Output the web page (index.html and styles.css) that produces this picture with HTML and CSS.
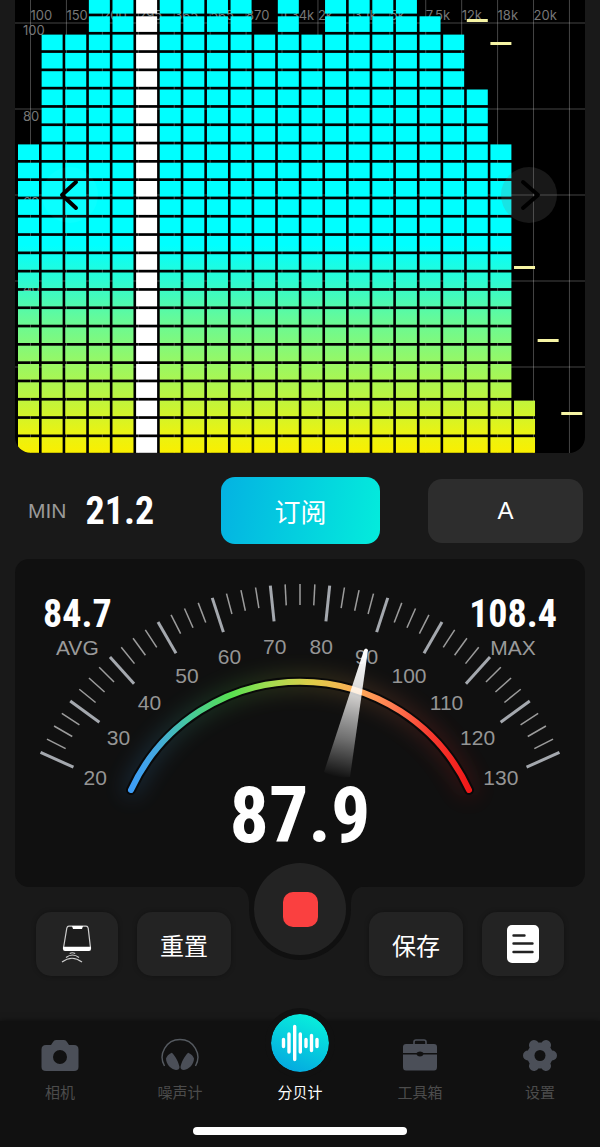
FILE: index.html
```html
<!DOCTYPE html>
<html lang="zh-CN">
<head>
  <meta charset="UTF-8">
  <meta name="viewport" content="width=device-width, initial-scale=1.0">
  <title>分贝计</title>
  <link rel="stylesheet" href="styles.css">
</head>
<body>

  <div class="app">
    <!-- Spectrum -->
    <section class="spectrum">
      <svg class="spectrum-chart" id="spectrum" viewBox="0 0 570 453">
        <defs>
          <linearGradient id="barFill" gradientUnits="userSpaceOnUse" x1="0" y1="0" x2="0" y2="453">
            <stop offset="0.54" stop-color="#00ffff"/>
            <stop offset="0.62" stop-color="#2cfbd2"/>
            <stop offset="0.7" stop-color="#62fa9c"/>
            <stop offset="0.79" stop-color="#92f86a"/>
            <stop offset="0.87" stop-color="#b8f544"/>
            <stop offset="0.95" stop-color="#e6f316"/>
            <stop offset="1" stop-color="#faef00"/>
          </linearGradient>
        </defs>
      </svg>
      <button class="arrow arrow-left" aria-label="上一个">
        <svg width="56" height="56" viewBox="0 0 56 56"><path d="M34 15 20 28l14 13"/></svg>
      </button>
      <button class="arrow arrow-right" aria-label="下一个">
        <svg width="56" height="56" viewBox="0 0 56 56"><path d="M22 15l15 13-15 13"/></svg>
      </button>
    </section>

    <!-- Min value and buttons -->
    <section class="controls">
      <div class="min">
        <span class="caption">MIN</span>
        <span class="number">21.2</span>
      </div>
      <button class="subscribe">订阅</button>
      <button class="weighting">A</button>
    </section>

    <!-- Gauge -->
    <section class="gauge">
      <svg class="gauge-dial" viewBox="0 0 570 328">
        <defs>
          <linearGradient id="arcFill" gradientUnits="userSpaceOnUse" x1="114" y1="0" x2="455" y2="0">
            <stop offset="0" stop-color="#3c9cf8"/>
            <stop offset="0.08" stop-color="#44a8e0"/>
            <stop offset="0.17" stop-color="#45c8a0"/>
            <stop offset="0.3" stop-color="#58e050"/>
            <stop offset="0.42" stop-color="#a8dc50"/>
            <stop offset="0.54" stop-color="#e0cc48"/>
            <stop offset="0.68" stop-color="#ffa858"/>
            <stop offset="0.78" stop-color="#ff7850"/>
            <stop offset="0.88" stop-color="#f83c30"/>
            <stop offset="1" stop-color="#f01818"/>
          </linearGradient>
          <linearGradient id="needleFill" gradientUnits="userSpaceOnUse" x1="350" y1="90" x2="321" y2="218">
            <stop offset="0" stop-color="#fff"/>
            <stop offset="0.3" stop-color="#fff" stop-opacity="0.85"/>
            <stop offset="0.7" stop-color="#fff" stop-opacity="0.4"/>
            <stop offset="1" stop-color="#fff" stop-opacity="0"/>
          </linearGradient>
          <filter id="glow" x="-20%" y="-40%" width="140%" height="180%">
            <feGaussianBlur stdDeviation="11"/>
          </filter>
        </defs>
        <path class="notch" d="M217 327q16 0 17 16v7a51 51 0 0 0 102 0v-7q1-16 17-16z"/>
        <path class="arc-glow" d="M116 231A186 186 0 0 1 454 231"/>
        <path class="arc-edge" d="M116 231A186 186 0 0 1 454 231"/>
        <path class="arc" d="M116 231A186 186 0 0 1 454 231"/>
        <g id="scale"></g>
        <path class="needle" d="M349 91q2-3 4 0L335 218Q322 220 309 213z"/>
      </svg>
      <div class="readings">
        <div class="reading">
          <span class="number">84.7</span>
          <span class="caption">AVG</span>
        </div>
        <div class="reading">
          <span class="number">108.4</span>
          <span class="caption">MAX</span>
        </div>
      </div>
      <div class="current">87.9</div>
    </section>

    <!-- Actions -->
    <section class="actions">
      <button class="action action-icon" aria-label="手机">
        <svg width="34" height="40" viewBox="0 0 34 40">
          <path d="M9 2.200h17q1.800 0 2.200 2L30.500 24h-27L6.800 4.200Q7.200 2.200 9 2.200z" fill="#1c1c1c" stroke="#ccc" stroke-width="1.200"/>
          <path d="M12 2h11l-1 3h-9z" fill="#fff"/>
          <path d="M3 22.700h28v2.300q0 2-2 2H5q-2 0-2-2z" fill="#fff"/>
          <path d="M9.700 29.500q2.500-1.500 5.500 0M6 33.500q6.500-5 13 0M2 38q10-7.500 20 0" fill="none" stroke="#ccc" stroke-width="1.200"/>
        </svg>
      </button>
      <button class="action">重置</button>
      <button class="record" aria-label="停止"><span class="stop"></span></button>
      <button class="action">保存</button>
      <button class="action action-icon" aria-label="记录">
        <svg width="32" height="38" viewBox="0 0 32 38">
          <rect width="32" height="38" rx="5" fill="#fff"/>
          <path d="M6.500 10.500h11M6.500 18.500h19M6.500 27h19" stroke="#222" stroke-width="2.400" stroke-linecap="round"/>
        </svg>
      </button>
    </section>

    <!-- Tab bar -->
    <nav class="tab-bar">
      <div class="tabs">
        <a class="tab" href="#">
          <svg class="tab-icon" viewBox="0 0 38 34">
            <path fill-rule="evenodd" d="M5 7h5l2-3q1-2 3-2h8q2 0 3 2l2 3h5q4.500 0 4.500 4.500V29q0 4-4.500 4H5q-4.500 0-4.500-4V11.500Q.500 7 5 7zM19 12a7 7 0 1 0 0 14 7 7 0 0 0 0-14z"/>
          </svg>
          <span>相机</span>
        </a>
        <a class="tab" href="#">
          <svg class="tab-icon" viewBox="0 0 38 34">
            <path d="M3.500 28A17.800 17.800 0 1 1 34.500 28" fill="none" stroke="#555a60" stroke-width="1.400"/>
            <path d="M10.700 14.700C14 17 18 25 18.500 29q0 3-3.500 3C10 31.500 5 26 5 20.500q1-3.500 5.700-5.800zM27.300 14.700C24 17 20 25 19.500 29q0 3 3.500 3C28 31.500 33 26 33 20.500q-1-3.500-5.700-5.800z"/>
          </svg>
          <span>噪声计</span>
        </a>
        <a class="tab tab-active" href="#">
          <svg class="tab-round" viewBox="0 0 58 58">
            <defs>
              <linearGradient id="tabFill" x1="0.700" y1="0" x2="0.300" y2="1">
                <stop offset="0" stop-color="#08f0dc"/>
                <stop offset="1" stop-color="#04a8e0"/>
              </linearGradient>
            </defs>
            <circle cx="29" cy="29" r="29" fill="url(#tabFill)"/>
            <path d="M12.500 25.500v7M18 20v18M23.700 12.500v33M29.300 20v18M35 25.500v7M40.500 21.500v15M46 25.500v7" stroke="#fff" stroke-width="3.400" stroke-linecap="round"/>
          </svg>
          <span>分贝计</span>
        </a>
        <a class="tab" href="#">
          <svg class="tab-icon" viewBox="0 0 38 34">
            <path d="M13 6.500V4q0-2 2-2h8q2 0 2 2v2.500" fill="none" stroke="#4b4f58" stroke-width="1.600"/>
            <path d="M5 6h28q3 0 3 3v6H22.500q-1-1.500-3.500-1.500T15.500 15H2V9q0-3 3-3z"/>
            <path d="M2 16.500h13.500q1 2 3.500 2t3.500-2H36V29q0 3.500-3 3.500H5q-3 0-3-3.500z"/>
          </svg>
          <span>工具箱</span>
        </a>
        <a class="tab" href="#">
          <svg class="tab-icon" viewBox="0 0 38 34">
            <circle cx="19" cy="17.500" r="13"/>
            <path d="M7 17.500h24M13 7.100l12 20.800M25 7.100 13 27.900" stroke="#4b4f58" stroke-width="10" stroke-linecap="round"/>
            <circle cx="19" cy="17.500" r="5.500" fill="#111"/>
          </svg>
          <span>设置</span>
        </a>
      </div>
      <div class="home-indicator"></div>
    </nav>
  </div>

  <script src="script.js"></script>
</body>
</html>
```

FILE: styles.css
```css
/* Basic Reset */
* {
  margin: 0;
  padding: 0;
  box-sizing: border-box;
}

body {
  background-color: #191919;
  color: #fff;
  font-family: "Liberation Sans", "Noto Sans CJK SC", sans-serif;
}

button {
  border: none;
  color: #fff;
  font-family: inherit;
  cursor: pointer;
}

svg {
  display: block;
}

.app {
  display: flex;
  flex-direction: column;
  min-height: 100vh;
}

.number,
.current {
  font-family: "Liberation Sans Narrow", "Roboto Condensed", "Liberation Sans", sans-serif;
  font-weight: 700;
}

.number {
  font-size: 38px;
  line-height: 44px;
}

.caption {
  color: #9a9a9a;
  font-size: 21px;
  line-height: 24px;
}

/* Spectrum */
.spectrum {
  position: relative;
  margin: 0 15px;
  background-color: #000;
  border-radius: 0 0 16px 16px;
  overflow: hidden;
}

.spectrum-chart {
  width: 100%;
}

.grid-line {
  stroke: #fff;
  stroke-opacity: 0.27;
}

.axis-label {
  fill: #777;
  font-family: Inter, sans-serif;
  font-size: 13px;
}

.bar {
  fill: url(#barFill);
}

.bar-selected {
  fill: #fff;
}

.peak {
  fill: #f6f4a4;
}

.arrow {
  position: absolute;
  top: 167px;
  width: 56px;
  height: 56px;
  border-radius: 50%;
  background-color: rgba(120, 120, 120, 0.2);
}

.arrow-left {
  left: 27px;
  background-color: rgba(255, 255, 255, 0.04);
}

.arrow-right {
  right: 28px;
}

.arrow path {
  fill: none;
  stroke: #000;
  stroke-width: 4;
  stroke-linecap: round;
  stroke-linejoin: round;
}

/* Controls */
.controls {
  display: flex;
  align-items: center;
  gap: 48px;
  margin: 24px 17px 15px 28px;
}

.min {
  flex: 1;
  display: flex;
  align-items: center;
  gap: 19px;
}

.subscribe {
  width: 159px;
  height: 67px;
  border-radius: 14px;
  background: linear-gradient(100deg, #04b2e2, #04ecdc);
  font-size: 26px;
}

.weighting {
  width: 155px;
  height: 64px;
  border-radius: 14px;
  background-color: #2d2d2d;
  font-size: 24px;
}

/* Gauge */
.gauge {
  display: grid;
  margin: 0 15px;
  background-color: #101010;
  border-radius: 14px;
}

.gauge > * {
  grid-area: 1 / 1;
}

.gauge-dial {
  width: 100%;
  overflow: visible;
}

.notch {
  fill: #101010;
}

.arc,
.arc-edge,
.arc-glow {
  fill: none;
  stroke-linecap: round;
}

.arc {
  stroke: url(#arcFill);
  stroke-width: 6;
}

.arc-edge {
  stroke: #090909;
  stroke-width: 10;
}

.arc-glow {
  stroke: url(#arcFill);
  stroke-width: 12;
  opacity: 0.25;
  filter: url(#glow);
}

.needle {
  fill: url(#needleFill);
}

.tick {
  stroke: #9c9c9c;
  stroke-width: 1.500;
}

.tick-major {
  stroke: #a4a8ae;
  stroke-width: 3;
}

.scale-label {
  fill: #959595;
  font-size: 21px;
  text-anchor: middle;
}

.readings {
  display: flex;
  justify-content: space-between;
  align-items: flex-start;
  padding: 33px 28px 0;
}

.reading {
  display: flex;
  flex-direction: column;
  align-items: center;
}

.current {
  align-self: end;
  padding-bottom: 30px;
  font-size: 78px;
  line-height: 82px;
  text-align: center;
}

/* Actions */
.actions {
  position: relative;
  display: flex;
  gap: 19px;
  padding: 25px 36px 45px;
}

.action {
  flex: 94;
  display: flex;
  justify-content: center;
  align-items: center;
  height: 64px;
  border-radius: 15px;
  background-color: #232323;
  box-shadow: 0 0 5px rgba(0, 0, 0, 0.3);
  font-size: 24px;
}

.action-icon {
  flex: 82;
}

.record {
  display: flex;
  justify-content: center;
  align-items: center;
  width: 92px;
  height: 92px;
  margin: -49px 4px 0;
  border-radius: 50%;
  background-color: #232323;
}

.stop {
  width: 35px;
  height: 35px;
  border-radius: 10px;
  background-color: #fa4040;
}

/* Tab Bar */
.tab-bar {
  flex: 1;
  background-color: #111;
  box-shadow: 0 0 6px rgba(0, 0, 0, 0.5);
}

.tabs {
  display: flex;
}

.tab {
  flex: 1;
  display: flex;
  flex-direction: column;
  align-items: center;
  gap: 10px;
  padding-top: 17px;
  color: #4c4c4c;
  font-size: 15px;
  line-height: 22px;
  text-decoration: none;
}

.tab-icon {
  width: 38px;
  height: 34px;
  fill: #4b4f58;
}

.tab-round {
  width: 58px;
  height: 58px;
  margin-top: -24px;
  border-radius: 50%;
  box-shadow: 0 0 0 6px #111;
}

.tab-active {
  color: #fff;
}

.home-indicator {
  width: 214px;
  height: 8px;
  margin: 23px auto 12px;
  border-radius: 4px;
  background-color: #fff;
}
```

FILE: script.js
```js
const SVG_NS = 'http://www.w3.org/2000/svg';

function add(parent, tag, attrs, text) {
  const el = document.createElementNS(SVG_NS, tag);
  for (const key in attrs) {
    el.setAttribute(key, attrs[key]);
  }
  if (text) el.textContent = text;
  parent.appendChild(el);
}

// Spectrum: number of lit blocks per column
const levels = [17, 23, 23, 25, 25, 25, 25, 25, 25, 25, 23, 25, 23, 25, 25, 25, 25, 24, 23, 20, 17, 3, 0, 0];
const peaks = { 19: 19, 20: 42, 21: 266, 22: 339, 23: 412 };
const selected = 5;
const freqs = ['100', '150', '200', '295', '365', '565', '870', '1.34k', '2k', '3.1k', '5k', '7.5k', '12k', '18k', '20k'];

function drawSpectrum() {
  const svg = document.getElementById('spectrum');

  for (let i = 0; i < 16; i++) {
    const x = 15.5 + i * 35.93;
    add(svg, 'line', { class: 'grid-line', x1: x, x2: x, y1: 0, y2: 453 });
    if (freqs[i]) add(svg, 'text', { class: 'axis-label', x: x, y: 20 }, freqs[i]);
  }

  for (let i = 0; i < 5; i++) {
    const y = 23 + i * 86;
    add(svg, 'line', { class: 'grid-line', x1: 0, x2: 570, y1: y, y2: y });
    add(svg, 'text', { class: 'axis-label', x: 8, y: y + 12 }, String(100 - i * 20));
  }

  levels.forEach((level, col) => {
    const x = 3 + col * 23.62;
    for (let row = 0; row < level; row++) {
      add(svg, 'rect', {
        class: col === selected ? 'bar-selected' : 'bar',
        x: x, y: 437.2 - row * 18.3, width: 21, height: 15.6
      });
    }
    if (peaks[col]) add(svg, 'rect', { class: 'peak', x: x, y: peaks[col], width: 21, height: 3 });
  });
}

// Gauge scale: 20 to 130 dB over 132 degrees
function drawScale() {
  const scale = document.getElementById('scale');
  const cx = 285, cy = 309;

  for (let i = 0; i <= 44; i++) {
    const major = i % 4 === 0;
    const a = (24 + i * 3) * Math.PI / 180;
    const inner = major ? 248 : 263;
    add(scale, 'line', {
      class: major ? 'tick tick-major' : 'tick',
      x1: cx - 284 * Math.cos(a), y1: cy - 284 * Math.sin(a),
      x2: cx - inner * Math.cos(a), y2: cy - inner * Math.sin(a)
    });
    if (major) {
      add(scale, 'text', {
        class: 'scale-label',
        x: cx - 2 - 222 * Math.cos(a), y: cy - 222 * Math.sin(a) + 7
      }, String(20 + i / 4 * 10));
    }
  }
}

drawSpectrum();
drawScale();
```
